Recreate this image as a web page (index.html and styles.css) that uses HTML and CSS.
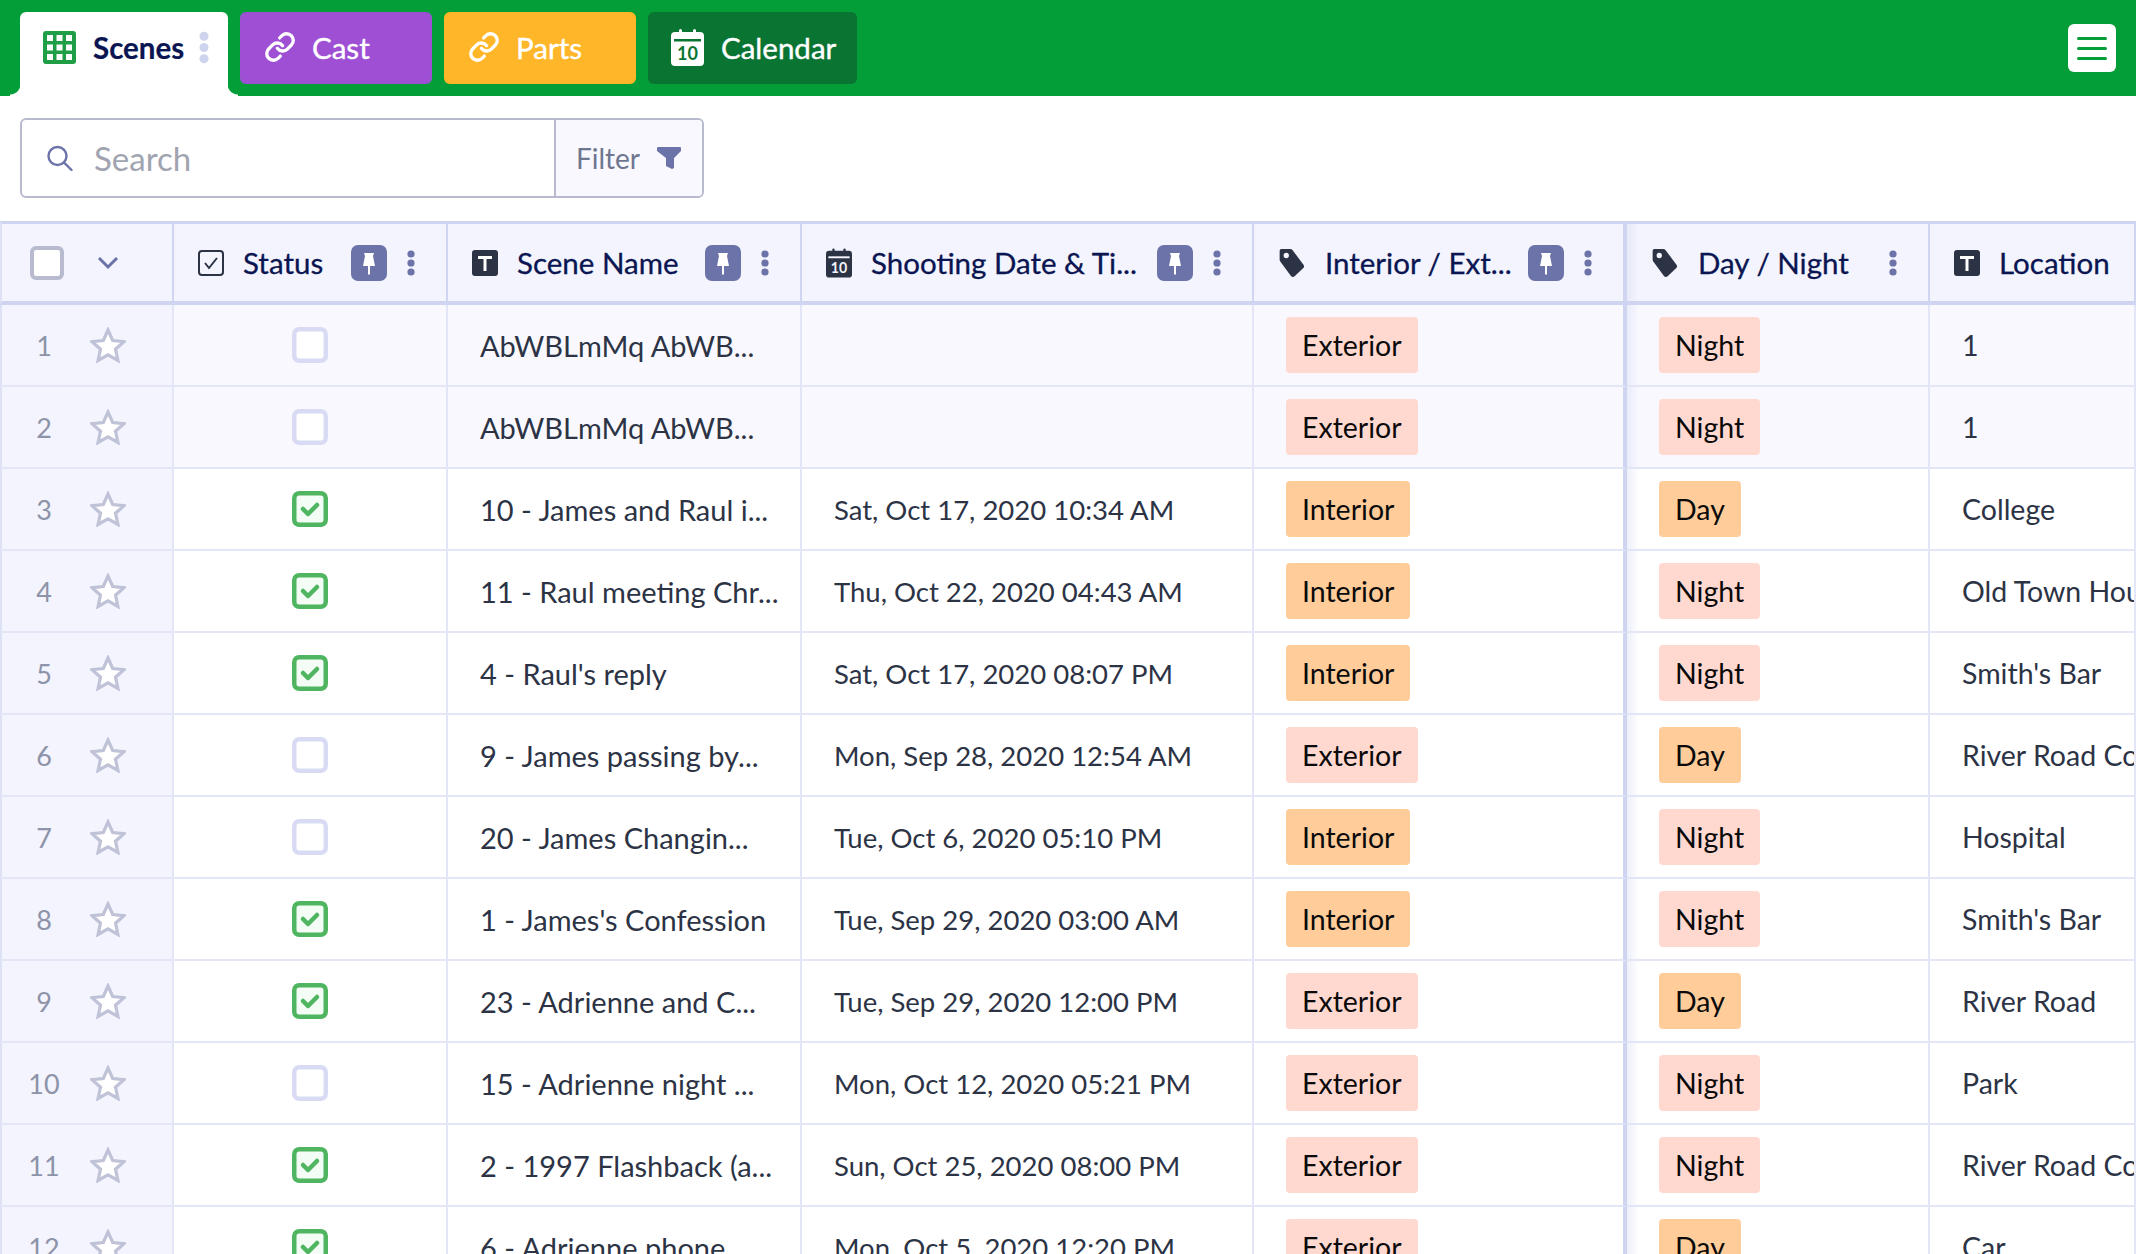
FILE: index.html
```html
<!DOCTYPE html>
<html lang="en">
<head>
    <meta charset="UTF-8">
    <title>Scenes</title>
    <link rel="stylesheet" href="styles.css">
</head>
<body>

    <!-- icons used more than once -->
    <svg class="sprites" width="0" height="0">
        <symbol id="i-link" viewBox="0 0 24 24">
            <path d="M10 13a5 5 0 0 0 7.540.540l3-3a5 5 0 0 0-7.070-7.070l-1.720 1.710M14 11a5 5 0 0 0-7.540-.540l-3 3a5 5 0 0 0 7.070 7.070l1.710-1.710" fill="none" stroke="currentColor" stroke-width="2.500" stroke-linecap="round"/>
        </symbol>
        <symbol id="i-cal" viewBox="0 0 33 37">
            <path d="M8 3V1.500a1.500 1.500 0 0 1 3 0V3h11V1.500a1.500 1.500 0 0 1 3 0V3h4a4 4 0 0 1 4 4v26a4 4 0 0 1-4 4H4a4 4 0 0 1-4-4V7a4 4 0 0 1 4-4z" fill="currentColor"/>
            <rect x="3" y="10" width="27" height="2.500" class="cal-line"/>
            <text x="16.500" y="31" text-anchor="middle" class="cal-num">10</text>
        </symbol>
        <symbol id="i-pin" viewBox="0 0 36 36">
            <rect width="36" height="36" rx="7" fill="#6c73a8"/>
            <path d="M13 8h10l-1 3 2 10H12l2-10zM17 21h2v8l-1 1-1-1z" fill="#fff"/>
        </symbol>
        <symbol id="i-dots" viewBox="0 0 8 26">
            <circle cx="4" cy="4" r="3.600" fill="currentColor"/>
            <circle cx="4" cy="13" r="3.600" fill="currentColor"/>
            <circle cx="4" cy="22" r="3.600" fill="currentColor"/>
        </symbol>
        <symbol id="i-text" viewBox="0 0 26 26">
            <rect width="26" height="26" rx="3" fill="#2c3345"/>
            <path d="M6 6h14v3h-5.500v12h-3V9H6z" fill="#fff"/>
        </symbol>
        <symbol id="i-tag" viewBox="0 0 30 34">
            <path d="M3 1h10a3 3 0 0 1 2.500 1.200L28 19a3 3 0 0 1-.5 4L18 32a3 3 0 0 1-4 0L1.500 15A4 4 0 0 1 1 13V3a2 2 0 0 1 2-2z" fill="#2c3345"/>
            <circle cx="8.500" cy="8.500" r="3" fill="#f3f4fd"/>
        </symbol>
        <symbol id="i-star" viewBox="0 0 36 36">
            <path d="M18 3l4.700 10.500 11.300 1.200-8.500 7.500 2.400 11.300L18 27.800 8.100 33.500l2.400-11.300L2 14.700l11.300-1.200z" fill="#fff" stroke="#c0c3d7" stroke-width="3.200" stroke-linejoin="miter"/>
        </symbol>
        <symbol id="i-check" viewBox="0 0 36 36">
            <rect x="2.250" y="2.250" width="31.500" height="31.500" rx="5" fill="#f3fdf5" stroke="#4fb560" stroke-width="4.500"/>
            <path d="M11 18l5 5 9-9" fill="none" stroke="#4fb560" stroke-width="4.500" stroke-linecap="round" stroke-linejoin="round"/>
        </symbol>
        <symbol id="i-empty" viewBox="0 0 36 36">
            <rect x="2.250" y="2.250" width="31.500" height="31.500" rx="5" fill="#fff" stroke="#d8dbf3" stroke-width="4.500"/>
        </symbol>
    </svg>

    <!-- Top bar -->
    <div class="topbar">
        <div class="tab tab-active">
            <svg class="grid-icon" viewBox="0 0 33 33" width="33" height="33">
                <rect width="33" height="33" rx="3" fill="#1f9e45"/>
                <path d="M4 4h6v6H4zM13.500 4h6v6h-6zM23 4h6v6h-6zM4 13.500h6v6H4zM13.500 13.500h6v6h-6zM23 13.500h6v6h-6zM4 23h6v6H4zM13.500 23h6v6h-6zM23 23h6v6h-6z" fill="#fff"/>
            </svg>
            <span>Scenes</span>
            <svg class="tab-dots" width="10" height="33"><use href="#i-dots"/></svg>
        </div>
        <div class="tab tab-cast">
            <svg class="link-icon" width="32" height="32"><use href="#i-link"/></svg>
            <span>Cast</span>
        </div>
        <div class="tab tab-parts">
            <svg class="link-icon" width="32" height="32"><use href="#i-link"/></svg>
            <span>Parts</span>
        </div>
        <div class="tab tab-calendar">
            <svg class="cal-icon" width="33" height="37"><use href="#i-cal"/></svg>
            <span>Calendar</span>
        </div>
        <div class="menu-button">
            <i></i><i></i><i></i>
        </div>
    </div>

    <!-- Search -->
    <div class="toolbar">
        <div class="search-box">
            <div class="search-input">
                <svg viewBox="0 0 26 26" width="27" height="26">
                    <circle cx="11" cy="11" r="9" fill="none" stroke="#6c73a8" stroke-width="2.400"/>
                    <path d="M18 18l7 7" stroke="#6c73a8" stroke-width="2.400" stroke-linecap="round"/>
                </svg>
                <span>Search</span>
            </div>
            <div class="filter">
                <span>Filter</span>
                <svg viewBox="0 0 24 22" width="24" height="22">
                    <path d="M1 0h22a1 1 0 0 1 1 1v3l-7 7v10l-2 1-6-3v-8L0 4V1a1 1 0 0 1 1-1z" fill="#6c73a8"/>
                </svg>
            </div>
        </div>
    </div>

    <!-- Table -->
    <div class="table-wrap">
        <table class="scenes">
            <colgroup>
                <col class="c-row"><col class="c-status"><col class="c-name"><col class="c-date"><col class="c-int"><col class="c-day"><col class="c-loc">
            </colgroup>
            <thead>
                <tr>
                    <th class="row-head">
                        <div class="row-cell">
                            <span class="head-check"></span>
                            <svg class="chevron" viewBox="0 0 22 14" width="22" height="14"><path d="M2 2l9 9 9-9" fill="none" stroke="#6c73a8" stroke-width="3"/></svg>
                        </div>
                    </th>
                    <th>
                        <div class="head">
                            <svg class="type-icon" viewBox="0 0 26 26" width="26" height="26"><rect x="1" y="1" width="24" height="24" rx="3" fill="none" stroke="#2c3345" stroke-width="2"/><path d="M7 13l4 5 8-10" fill="none" stroke="#2c3345" stroke-width="2"/></svg>
                            <span class="head-text">Status</span>
                            <svg class="pin" width="36" height="36"><use href="#i-pin"/></svg>
                            <svg class="dots" width="8" height="26"><use href="#i-dots"/></svg>
                        </div>
                    </th>
                    <th>
                        <div class="head">
                            <svg class="type-icon" width="26" height="26"><use href="#i-text"/></svg>
                            <span class="head-text">Scene Name</span>
                            <svg class="pin" width="36" height="36"><use href="#i-pin"/></svg>
                            <svg class="dots" width="8" height="26"><use href="#i-dots"/></svg>
                        </div>
                    </th>
                    <th>
                        <div class="head">
                            <svg class="type-icon head-cal" width="26" height="30"><use href="#i-cal"/></svg>
                            <span class="head-text">Shooting Date &amp; Ti...</span>
                            <svg class="pin" width="36" height="36"><use href="#i-pin"/></svg>
                            <svg class="dots" width="8" height="26"><use href="#i-dots"/></svg>
                        </div>
                    </th>
                    <th class="frozen">
                        <div class="head">
                            <svg class="type-icon" width="28" height="30"><use href="#i-tag"/></svg>
                            <span class="head-text">Interior / Ext...</span>
                            <svg class="pin" width="36" height="36"><use href="#i-pin"/></svg>
                            <svg class="dots" width="8" height="26"><use href="#i-dots"/></svg>
                        </div>
                    </th>
                    <th class="after-frozen">
                        <div class="head">
                            <svg class="type-icon" width="28" height="30"><use href="#i-tag"/></svg>
                            <span class="head-text">Day / Night</span>
                            <svg class="dots dots-only" width="8" height="26"><use href="#i-dots"/></svg>
                        </div>
                    </th>
                    <th>
                        <div class="head">
                            <svg class="type-icon" width="26" height="26"><use href="#i-text"/></svg>
                            <span class="head-text">Location</span>
                        </div>
                    </th>
                </tr>
            </thead>
            <tbody id="rows"></tbody>
        </table>
    </div>

    <script>
        const scenes = [
            [0, "AbWBLmMq AbWB...", "", "Exterior", "Night", "1"],
            [0, "AbWBLmMq AbWB...", "", "Exterior", "Night", "1"],
            [1, "10 - James and Raul i...", "Sat, Oct 17, 2020 10:34 AM", "Interior", "Day", "College"],
            [1, "11 - Raul meeting Chr...", "Thu, Oct 22, 2020 04:43 AM", "Interior", "Night", "Old Town House"],
            [1, "4 - Raul's reply", "Sat, Oct 17, 2020 08:07 PM", "Interior", "Night", "Smith's Bar"],
            [0, "9 - James passing by...", "Mon, Sep 28, 2020 12:54 AM", "Exterior", "Day", "River Road Cottage"],
            [0, "20 - James Changin...", "Tue, Oct 6, 2020 05:10 PM", "Interior", "Night", "Hospital"],
            [1, "1 - James's Confession", "Tue, Sep 29, 2020 03:00 AM", "Interior", "Night", "Smith's Bar"],
            [1, "23 - Adrienne and C...", "Tue, Sep 29, 2020 12:00 PM", "Exterior", "Day", "River Road"],
            [0, "15 - Adrienne night ...", "Mon, Oct 12, 2020 05:21 PM", "Exterior", "Night", "Park"],
            [1, "2 - 1997 Flashback (a...", "Sun, Oct 25, 2020 08:00 PM", "Exterior", "Night", "River Road Cottage"],
            [1, "6 - Adrienne phone ...", "Mon, Oct 5, 2020 12:20 PM", "Exterior", "Day", "Car"]
        ];

        // Interior and Day share the orange label, Exterior and Night the pink one
        function tag(value) {
            const kind = value === "Interior" || value === "Day" ? "tag-orange" : "tag-pink";
            return `<span class="tag ${kind}">${value}</span>`;
        }

        document.getElementById("rows").innerHTML = scenes.map((s, i) => `
            <tr class="${i < 2 ? "row-new" : ""}">
                <td class="row-head">
                    <div class="row-cell">
                        <span class="row-num">${i + 1}</span>
                        <svg class="star" width="36" height="36"><use href="#i-star"/></svg>
                    </div>
                </td>
                <td class="status"><svg class="box" width="36" height="36"><use href="#${s[0] ? "i-check" : "i-empty"}"/></svg></td>
                <td class="name">${s[1]}</td>
                <td class="date">${s[2]}</td>
                <td class="frozen">${tag(s[3])}</td>
                <td class="after-frozen">${tag(s[4])}</td>
                <td class="location">${s[5]}</td>
            </tr>`).join("");
    </script>

</body>
</html>
```
FILE: styles.css
```css
body {
    margin: 0;
    height: 1254px;
    overflow: hidden;
    background: white;
    font-family: Lato, "Liberation Sans", sans-serif;
    color: #2c3345;
}
.sprites {
    position: absolute;
}
.cal-line {
    fill: var(--cal-ink);
}
.cal-num {
    font-family: Lato, sans-serif;
    font-size: 18px;
    font-weight: bold;
    fill: var(--cal-ink);
}

/* top bar */
.topbar {
    height: 96px;
    box-sizing: border-box;
    padding: 12px 20px 12px 20px;
    background: #049e38;
    display: flex;
    gap: 12px;
}
.tab {
    height: 72px;
    width: 192px;
    box-sizing: border-box;
    border-radius: 6px;
    display: flex;
    align-items: center;
    color: white;
    font-size: 29.5px;
    -webkit-text-stroke: 0.4px;
    padding: 0 0 2px 24px;
}
.tab-active {
    position: relative;
    width: 208px;
    height: 84px;
    padding: 0 0 14px 23px;
    border-radius: 6px 6px 0 0;
    background: white;
    color: #0a1551;
    -webkit-text-stroke: 0.2px;
    font-weight: 700;
}
.tab-active::before,
.tab-active::after {
    content: "";
    position: absolute;
    bottom: 0;
    width: 10px;
    height: 12px;
}
.tab-active::before {
    left: -10px;
    background: radial-gradient(circle at 0 0, #049e38 10px, white 11px);
}
.tab-active::after {
    right: -10px;
    background: radial-gradient(circle at 100% 0, #049e38 10px, white 11px);
}
.grid-icon {
    margin-right: 17px;
}
.tab-dots {
    margin-left: 15px;
    color: #ced4ee;
}
.link-icon {
    margin-right: 16px;
}
.tab-cast {
    background: #9e4fd4;
}
.tab-parts {
    background: #ffb629;
}
.tab-calendar {
    width: 209px;
    padding-left: 23px;
    background: #0a7533;
}
.cal-icon {
    --cal-ink: #0a7533;
    margin-right: 17px;
}
.menu-button {
    margin: 12px 0 0 auto;
    width: 48px;
    height: 48px;
    box-sizing: border-box;
    padding: 0 9px;
    border-radius: 6px;
    background: white;
    display: flex;
    flex-direction: column;
    justify-content: center;
    gap: 7px;
}
.menu-button i {
    height: 3px;
    border-radius: 2px;
    background: #049e38;
}

/* search */
.toolbar {
    padding: 22px 20px 23px;
}
.search-box {
    width: 684px;
    height: 80px;
    box-sizing: border-box;
    border: 2px solid #b8bbd0;
    border-radius: 6px;
    display: flex;
}
.search-input {
    width: 534px;
    display: flex;
    align-items: center;
    gap: 21px;
    padding-left: 24px;
    box-sizing: border-box;
    border-right: 2px solid #b8bbd0;
    font-size: 33px;
    color: #a0a4b0;
}
.filter {
    flex: 1;
    display: flex;
    align-items: center;
    gap: 17px;
    padding-left: 20px;
    background: #f8f8fe;
    border-radius: 0 4px 4px 0;
    font-size: 28px;
    color: #6f7690;
}

/* table */
.table-wrap {
    width: 2136px;
    overflow: hidden;
}
.scenes {
    width: 2136px;
    table-layout: fixed;
    border-collapse: separate;
    border-spacing: 0;
    font-size: 28.5px;
}
.c-row { width: 174px; }
.c-status { width: 274px; }
.c-name { width: 354px; }
.c-date { width: 452px; }
.c-int { width: 373px; }
.c-day { width: 303px; }
.c-loc { width: 206px; }

.scenes th {
    height: 84px;
    padding: 0;
    box-sizing: border-box;
    background: #f3f4fd;
    border-top: 3px solid #cfd4f0;
    border-bottom: 4px solid #cfd4f0;
    border-right: 2px solid #cfd4f0;
    text-align: left;
    font-weight: 400;
    font-size: 29.5px;
    -webkit-text-stroke: 0.3px;
    color: #0a1551;
}
.scenes td {
    height: 82px;
    padding: 0 0 0 32px;
    box-sizing: border-box;
    border-bottom: 2px solid #e3e6f7;
    border-right: 2px solid #e3e6f7;
    white-space: nowrap;
    overflow: hidden;
}
.scenes td.name {
    font-size: 29px;
}
.scenes td.date {
    font-size: 27.5px;
}
.row-new td {
    background: #f8f8fe;
}
.scenes th.row-head,
.scenes td.row-head {
    padding: 0;
    background: #f3f4fd;
    border-left: 2px solid #dfe2f5;
    font-size: 27px;
}
.row-cell {
    display: flex;
    align-items: center;
    height: 100%;
}
.head-check {
    width: 34px;
    height: 34px;
    margin-left: 28px;
    box-sizing: border-box;
    border: 4px solid #b8bbd0;
    border-radius: 6px;
    background: white;
}
.chevron {
    margin-left: 33px;
}
.row-num {
    width: 84px;
    text-align: center;
    color: #8d93a8;
}
.star {
    margin-left: 4px;
}
.head {
    display: flex;
    align-items: center;
    padding: 0 31px 0 24px;
}
.type-icon {
    flex: none;
    margin-right: 19px;
}
.head-cal {
    --cal-ink: #f3f4fd;
    color: #2c3345;
}
.head-text {
    white-space: nowrap;
}
.pin {
    flex: none;
    margin-left: auto;
}
.dots {
    flex: none;
    margin-left: 20px;
    color: #6c73a8;
}
.dots-only {
    margin-left: auto;
}
.scenes td.status {
    padding: 0;
    text-align: center;
}
.box {
    display: block;
    margin: 0 auto;
}
.scenes .frozen {
    border-right: 4px solid #cfd4f0;
}
.scenes .after-frozen {
    background-image: linear-gradient(to right, rgba(207, 212, 240, 0.35), rgba(207, 212, 240, 0) 12px);
}
.tag {
    display: inline-block;
    height: 56px;
    line-height: 56px;
    padding: 0 16px;
    border-radius: 4px;
    color: #0a0a0a;
}
.tag-pink {
    background: #ffd9d0;
}
.tag-orange {
    background: #ffcc9a;
}
```
